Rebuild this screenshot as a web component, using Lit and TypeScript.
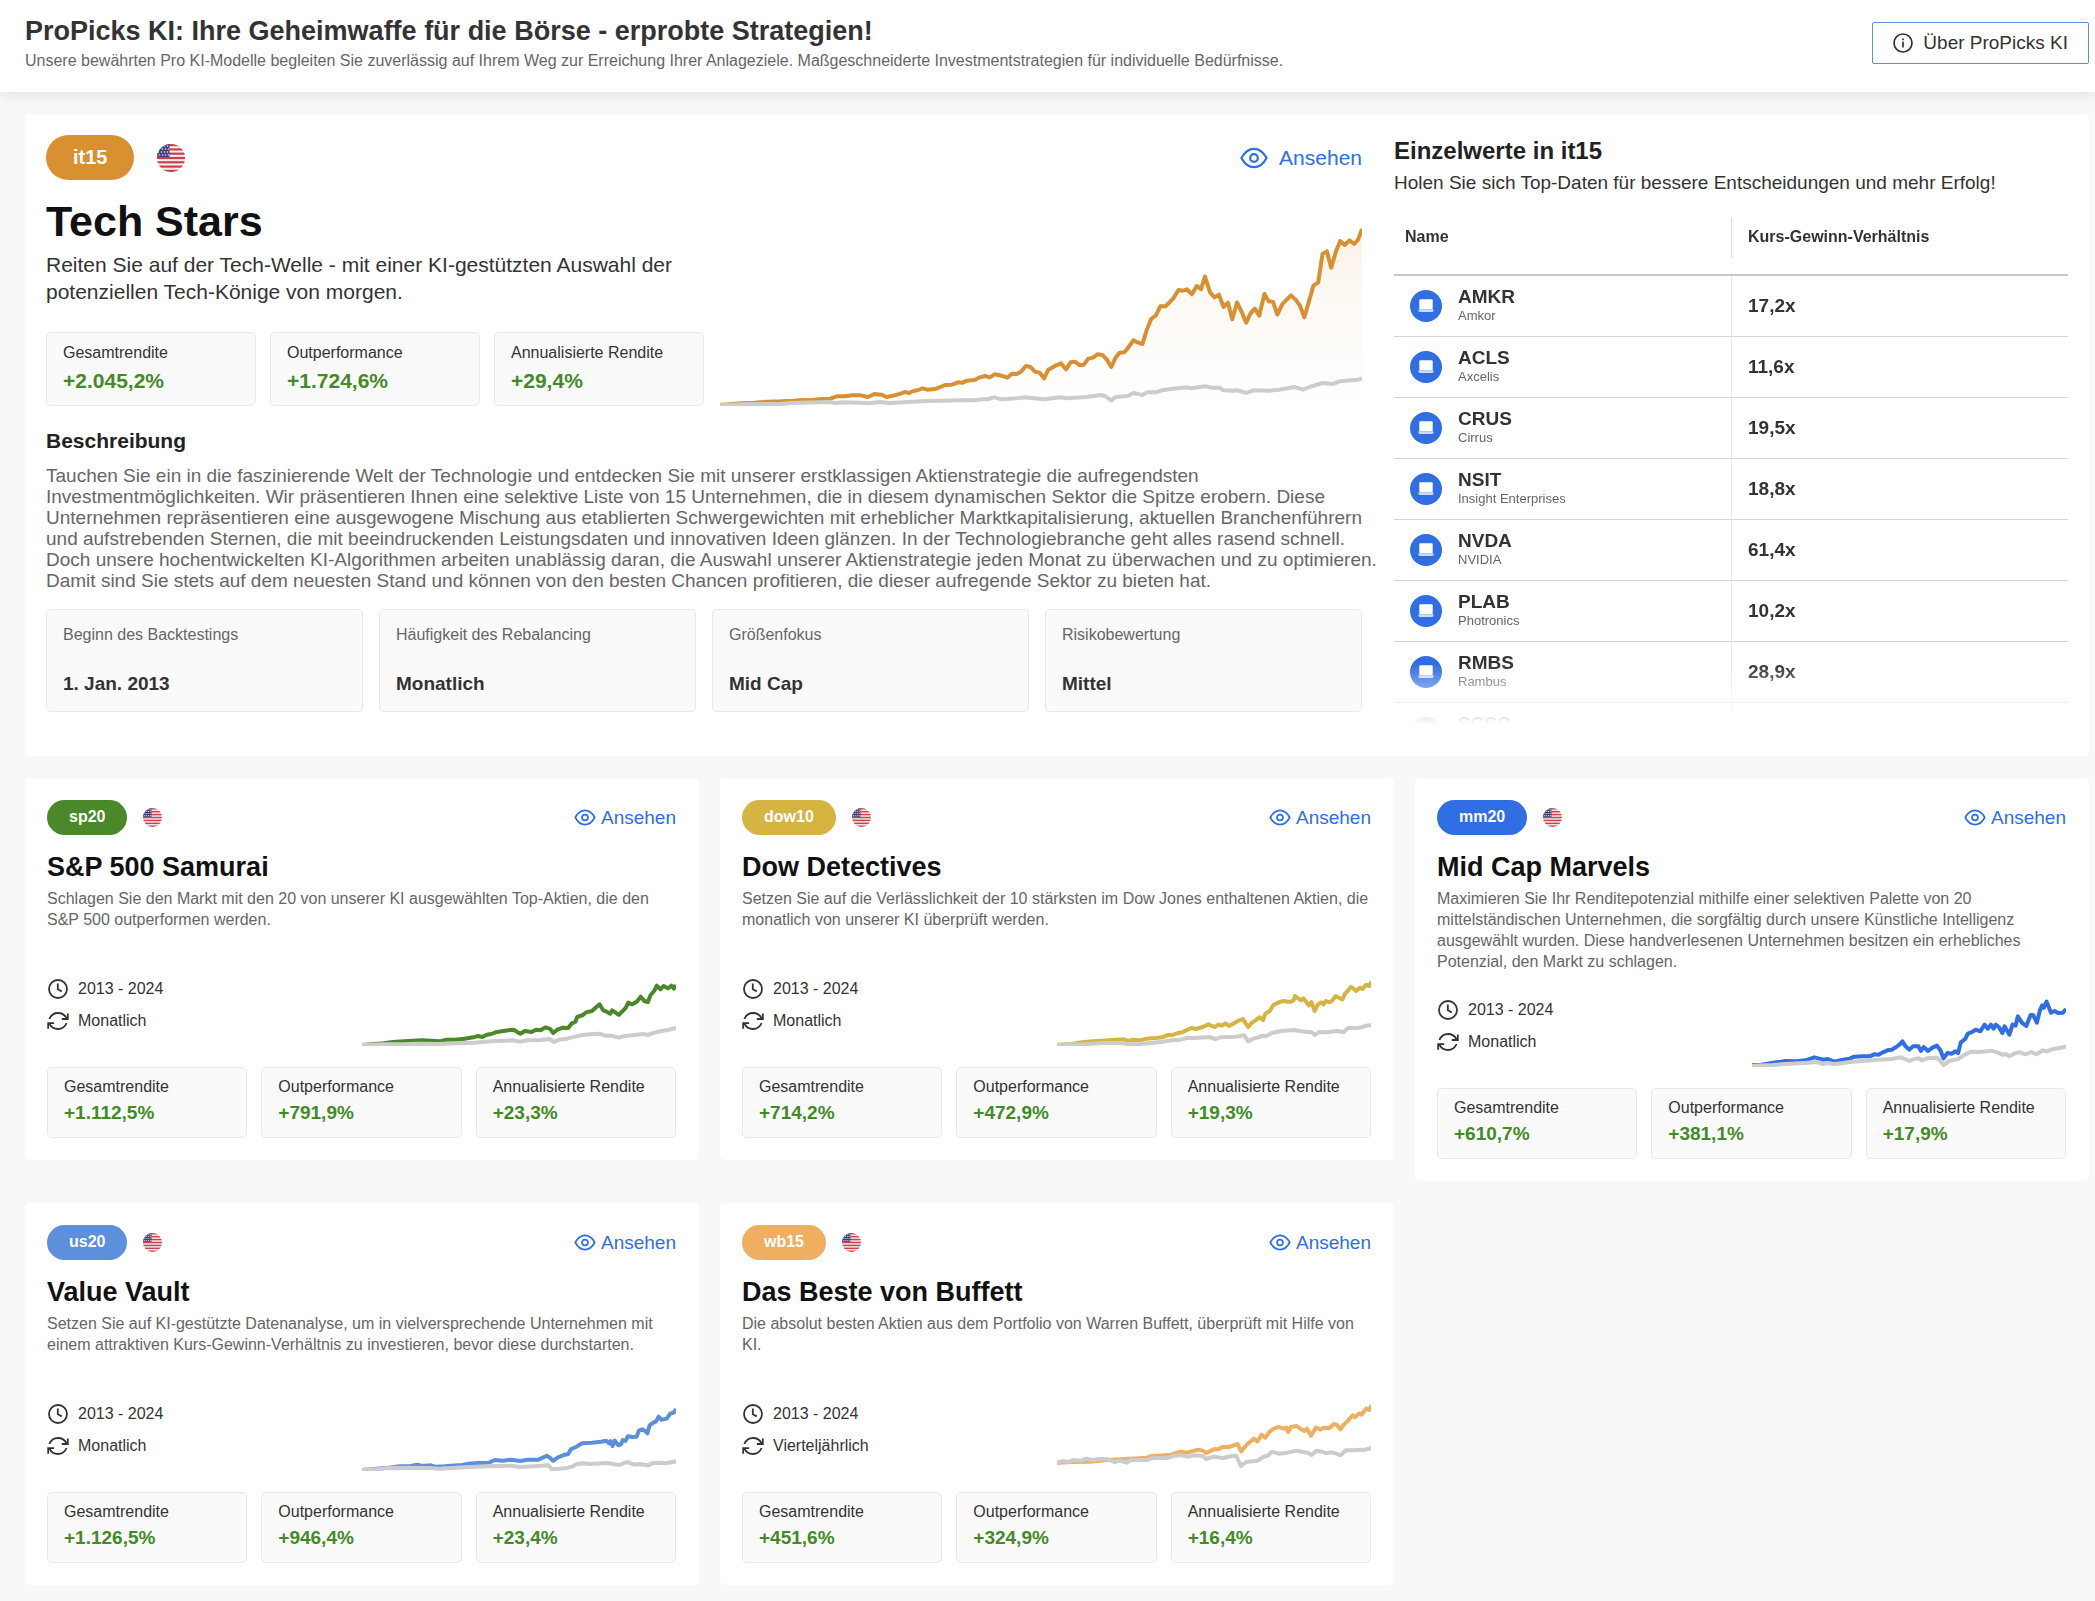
import { LitElement, html, svg, css } from "lit";
import { customElement, property } from "lit/decorators.js";
import { styleMap } from "lit/directives/style-map.js";

interface Chart {
  viewBox: string;
  line: string;
  benchmark: string;
}

interface Strategy {
  code: string;
  color: string;
  name: string;
  text: string;
  rebalancing: string;
  stats: [string, string][];
  chart: Chart;
}

const stats = (total: string, out: string, annual: string): [string, string][] => [
  ["Gesamtrendite", total],
  ["Outperformance", out],
  ["Annualisierte Rendite", annual],
];

const featuredChart: Chart = {
  viewBox: "46 50 1480 567",
  line: "46,614 95,609 125,607 155,604 185,603 215,601 235,599 255,600 280,596 300,595 315,588 335,588 350,585 370,585 387,590 402,581 418,583 430,590 448,585 462,580 472,575 482,578 492,572 503,569 513,564 524,568 545,565 565,554 580,553 595,546 605,547 615,541 633,539 645,531 657,527 668,531 679,522 698,527 708,532 719,520 730,521 740,514 751,497 762,500 772,514 783,517 793,534 803,508 815,499 832,489 844,507 854,486 865,484 875,495 885,493 895,475 906,472 916,462 928,464 938,478 948,500 958,472 967,457 978,456 988,440 999,420 1010,427 1020,431 1030,388 1040,356 1051,345 1061,318 1073,318 1091,294 1103,269 1113,271 1123,267 1134,282 1145,257 1155,266 1164,229 1176,277 1186,291 1196,283 1207,320 1217,307 1227,357 1238,306 1248,333 1259,367 1269,339 1279,325 1289,346 1301,281 1311,303 1321,305 1331,343 1342,312 1362,285 1373,298 1383,316 1393,351 1404,302 1414,256 1425,246 1435,161 1445,153 1455,202 1466,153 1476,122 1486,134 1497,120 1508,131 1517,118 1526,86",
  benchmark: "46,615 95,612 160,611 180,612 210,608 300,605 310,608 330,606 370,607 390,609 415,605 435,608 480,605 520,602 560,601 590,600 630,600 650,597 665,596 678,591 695,597 730,594 750,591 770,594 793,597 830,591 845,594 890,590 925,584 935,588 948,600 958,590 985,587 999,578 1020,584 1030,576 1050,576 1065,570 1090,565 1123,561 1133,564 1164,558 1180,562 1197,562 1207,570 1228,571 1240,570 1259,578 1275,570 1310,571 1335,568 1370,560 1390,568 1405,560 1420,554 1435,548 1458,551 1475,543 1500,540 1517,538 1526,534",
};

const strategies: Strategy[] = [
  {
    code: "sp20",
    color: "#4a8829",
    name: "S&P 500 Samurai",
    text: "Schlagen Sie den Markt mit den 20 von unserer KI ausgewählten Top-Aktien, die den S&P 500 outperformen werden.",
    rebalancing: "Monatlich",
    stats: stats("+1.112,5%", "+791,9%", "+23,3%"),
    chart: {
      viewBox: "811 591 703 234",
      line: "811,822 860,817 880,813 905,811 945,808 965,809 985,811 1000,806 1020,806 1040,803 1060,799 1070,795 1080,798 1090,791 1100,789 1110,784 1130,779 1150,776 1160,785 1165,788 1175,780 1190,783 1200,776 1210,778 1222,769 1232,774 1238,786 1248,776 1260,770 1272,771 1280,757 1288,752 1292,738 1305,732 1312,724 1325,720 1333,710 1342,700 1350,718 1358,722 1366,728 1370,718 1378,725 1385,732 1392,722 1400,712 1406,695 1415,700 1425,692 1434,677 1442,690 1450,693 1456,672 1464,660 1470,644 1478,655 1485,645 1495,652 1503,644 1508,653 1513,642",
      benchmark: "811,822 860,820 900,820 940,818 980,819 1020,817 1060,815 1100,811 1130,809 1150,808 1163,812 1180,808 1210,807 1230,804 1240,813 1250,806 1270,803 1280,799 1300,793 1320,790 1342,788 1355,794 1368,794 1385,800 1395,796 1420,792 1440,789 1450,792 1465,785 1480,780 1495,777 1513,771",
    },
  },
  {
    code: "dow10",
    color: "#d5b441",
    name: "Dow Detectives",
    text: "Setzen Sie auf die Verlässlichkeit der 10 stärksten im Dow Jones enthaltenen Aktien, die monatlich von unserer KI überprüft werden.",
    rebalancing: "Monatlich",
    stats: stats("+714,2%", "+472,9%", "+19,3%"),
    chart: {
      viewBox: "800 591 702 234",
      line: "800,822 835,818 860,813 880,811 900,809 925,807 950,805 960,810 968,806 985,808 1000,803 1020,801 1035,799 1045,793 1060,791 1070,786 1080,784 1090,777 1100,771 1110,774 1125,768 1138,760 1145,765 1153,768 1160,761 1168,764 1176,757 1184,765 1195,757 1205,749 1215,744 1221,757 1227,768 1235,755 1243,748 1252,739 1260,747 1265,728 1275,720 1283,702 1295,694 1305,690 1315,692 1322,692 1328,688 1331,675 1338,682 1345,688 1350,682 1357,694 1362,703 1368,693 1375,720 1382,701 1390,694 1395,700 1400,690 1408,694 1415,688 1422,675 1430,681 1437,685 1443,668 1450,658 1456,648 1462,653 1468,660 1476,650 1482,654 1490,641 1497,645 1502,632",
      benchmark: "800,821 870,819 900,816 945,816 960,820 985,819 1010,816 1035,812 1055,808 1075,806 1090,801 1110,801 1140,798 1153,804 1165,799 1200,797 1218,793 1227,811 1240,802 1250,799 1258,794 1265,796 1280,786 1300,780 1330,777 1345,781 1360,783 1368,783 1376,792 1385,783 1400,784 1425,780 1440,783 1450,771 1470,771 1480,769 1490,764 1502,762",
    },
  },
  {
    code: "mm20",
    color: "#2f6ee3",
    name: "Mid Cap Marvels",
    text: "Maximieren Sie Ihr Renditepotenzial mithilfe einer selektiven Palette von 20 mittelständischen Unternehmen, die sorgfältig durch unsere Künstliche Intelligenz ausgewählt wurden. Diese handverlesenen Unternehmen besitzen ein erhebliches Potenzial, den Markt zu schlagen.",
    rebalancing: "Monatlich",
    stats: stats("+610,7%", "+381,1%", "+17,9%"),
    chart: {
      viewBox: "794 656 711 234",
      line: "794,884 815,883 835,879 870,872 895,873 915,870 935,861 955,868 965,866 980,874 1000,868 1015,865 1025,859 1045,858 1060,858 1070,852 1080,853 1090,846 1100,840 1110,838 1120,830 1128,822 1134,813 1140,826 1150,838 1158,828 1170,828 1176,842 1182,830 1192,842 1202,832 1212,826 1220,840 1227,864 1236,848 1246,850 1253,843 1260,848 1266,816 1276,806 1282,790 1290,786 1300,778 1310,783 1320,763 1327,775 1334,763 1340,775 1345,763 1352,770 1360,788 1365,768 1376,793 1383,763 1390,766 1395,738 1404,757 1414,767 1424,734 1430,735 1438,757 1445,720 1450,705 1454,712 1460,694 1470,727 1478,722 1486,728 1497,727 1504,716",
      benchmark: "794,886 840,884 870,881 910,878 940,875 955,881 965,878 980,881 1000,878 1020,874 1050,871 1080,868 1110,866 1130,861 1150,872 1160,866 1172,864 1178,870 1190,864 1212,862 1220,872 1227,884 1240,872 1260,866 1275,853 1290,844 1310,845 1335,841 1350,847 1360,853 1368,851 1376,858 1390,848 1400,846 1412,852 1425,845 1437,852 1452,840 1460,843 1475,836 1490,833 1504,828",
    },
  },
  {
    code: "us20",
    color: "#5c8fdc",
    name: "Value Vault",
    text: "Setzen Sie auf KI-gestützte Datenanalyse, um in vielversprechende Unternehmen mit einem attraktiven Kurs-Gewinn-Verhältnis zu investieren, bevor diese durchstarten.",
    rebalancing: "Monatlich",
    stats: stats("+1.126,5%", "+946,4%", "+23,4%"),
    chart: {
      viewBox: "811 609 703 234",
      line: "811,840 870,833 895,829 920,828 935,824 945,828 965,826 975,830 995,829 1010,827 1035,825 1050,821 1070,819 1095,818 1108,810 1125,812 1145,809 1165,813 1180,809 1205,809 1215,803 1224,797 1232,804 1238,813 1248,803 1262,795 1272,792 1278,778 1290,770 1303,760 1325,758 1345,755 1357,752 1363,760 1367,753 1371,768 1376,752 1384,766 1390,763 1394,750 1400,753 1405,739 1415,741 1425,740 1430,722 1437,718 1443,722 1449,730 1454,706 1462,698 1468,695 1474,680 1480,689 1485,688 1492,686 1500,671 1508,668 1513,657",
      benchmark: "811,840 850,837 875,833 960,834 985,836 1040,832 1090,829 1145,827 1165,831 1205,828 1228,826 1236,838 1265,835 1280,830 1290,823 1305,820 1320,822 1360,819 1375,823 1387,825 1403,816 1420,824 1430,822 1450,826 1460,820 1475,818 1490,820 1513,814",
    },
  },
  {
    code: "wb15",
    color: "#eeaf60",
    name: "Das Beste von Buffett",
    text: "Die absolut besten Aktien aus dem Portfolio von Warren Buffett, überprüft mit Hilfe von KI.",
    rebalancing: "Vierteljährlich",
    stats: stats("+451,6%", "+324,9%", "+16,4%"),
    chart: {
      viewBox: "800 609 702 234",
      line: "800,818 835,816 875,815 905,811 940,808 960,806 980,805 1000,803 1012,798 1040,796 1055,794 1075,785 1090,788 1115,779 1125,782 1133,789 1150,778 1160,778 1170,770 1182,772 1203,762 1211,784 1225,762 1240,746 1247,755 1257,734 1265,743 1275,724 1285,715 1295,711 1305,716 1312,713 1316,726 1322,711 1335,708 1345,718 1352,723 1358,716 1367,737 1378,713 1388,719 1395,713 1408,714 1418,702 1424,704 1433,718 1440,704 1450,691 1460,676 1465,682 1475,670 1480,674 1490,656 1497,660 1502,646",
      benchmark: "800,820 812,813 825,816 835,810 855,812 865,806 880,810 895,807 915,808 928,816 940,812 955,818 965,810 1000,810 1015,804 1045,804 1060,798 1075,795 1090,800 1108,796 1125,798 1133,807 1150,800 1170,804 1190,798 1200,797 1205,812 1211,828 1222,816 1248,812 1260,801 1270,797 1280,785 1295,791 1310,789 1335,782 1350,786 1360,788 1368,795 1380,782 1393,785 1400,790 1410,787 1420,789 1433,796 1445,781 1460,781 1475,779 1485,780 1502,774",
    },
  },
];

const holdings: [string, string, string][] = [
  ["AMKR", "Amkor", "17,2x"],
  ["ACLS", "Axcelis", "11,6x"],
  ["CRUS", "Cirrus", "19,5x"],
  ["NSIT", "Insight Enterprises", "18,8x"],
  ["NVDA", "NVIDIA", "61,4x"],
  ["PLAB", "Photronics", "10,2x"],
  ["RMBS", "Rambus", "28,9x"],
  ["SCSC", "", ""],
];

const facts: [string, string][] = [
  ["Beginn des Backtestings", "1. Jan. 2013"],
  ["Häufigkeit des Rebalancing", "Monatlich"],
  ["Größenfokus", "Mid Cap"],
  ["Risikobewertung", "Mittel"],
];

const flagIcon = html`<svg class="flag" viewBox="0 0 28 28" aria-hidden="true">
  <defs><clipPath id="disc"><circle cx="14" cy="14" r="14" /></clipPath></defs>
  <g clip-path="url(#disc)">
    <rect width="28" height="28" fill="#f7eeee" />
    ${[0, 1, 2, 3, 4, 5, 6].map(
      (i) => svg`<rect y=${i * 4.3} width="28" height="2.2" fill="#c8414b" />`,
    )}
    <rect width="12.5" height="13" fill="#41427c" />
    ${[3, 6, 9, 12].map((y, row) =>
      [1.5, 4.5, 7.5, 10.5].map(
        (x) => svg`<circle cx=${x + (row % 2)} cy=${y - 1} r="0.8" fill="#e6e6f2" />`,
      ),
    )}
  </g>
</svg>`;

const eyeIcon = html`<svg class="eye" viewBox="0 0 28 22" aria-hidden="true" fill="none" stroke="currentColor" stroke-width="2.2">
  <path stroke-linejoin="round" d="M1.4 11C4.6 5 9 1.8 14 1.8S23.4 5 26.6 11C23.4 17 19 20.2 14 20.2S4.6 17 1.4 11Z" />
  <circle cx="14" cy="11" r="3.8" />
</svg>`;

const infoIcon = html`<svg class="info" viewBox="0 0 20 20" aria-hidden="true" fill="none" stroke="currentColor">
  <circle cx="10" cy="10" r="9" stroke-width="1.7" />
  <path stroke-width="1.7" d="M10 8.8V14.4M10 5.6V7.3" />
</svg>`;

const clockIcon = html`<svg class="meta-icon" viewBox="0 0 22 20" aria-hidden="true" fill="none" stroke="currentColor" stroke-width="1.8">
  <circle cx="11" cy="10" r="9" />
  <path d="M10.8 4.5V10.3L14.8 12.4" />
</svg>`;

const refreshIcon = html`<svg class="meta-icon" viewBox="0 0 22 20" aria-hidden="true" fill="none" stroke="currentColor" stroke-width="1.8">
  <path d="M2.4 8C3.9 4.4 7.2 2 11 2C14.8 2 18 4.2 19.6 7.4M20.8 2.4V8H14.8M19.6 12C18.1 15.6 14.8 18 11 18C7.2 18 4 15.8 2.4 12.6M1.2 17.8V12.100H7.2" />
</svg>`;

const laptopIcon = html`<svg class="ticker-icon" viewBox="0 0 32 32" aria-hidden="true">
  <circle cx="16" cy="16" r="16" fill="#2f6ee3" />
  <rect x="9.3" y="9.3" width="13.4" height="10" rx="1" fill="#fff" />
  <path d="M8.5 19.3H23.5V20.5A1.5 1.5 0 0 1 22 22H10A1.5 1.5 0 0 1 8.5 20.5Z" fill="#cbdcf8" />
</svg>`;

const shared = css`
  :host {
    display: block;
    font-family: "Liberation Sans", Arial, sans-serif;
    color: #333;
  }
  * {
    box-sizing: border-box;
  }
  h1, h2, h3, p, dl, dd {
    margin: 0;
  }
  .card {
    background: #fff;
    border-radius: 5px;
  }
  .top {
    display: flex;
    align-items: center;
  }
  .pill {
    color: #fff;
    font-weight: 700;
  }
  .view {
    display: flex;
    align-items: center;
    margin-left: auto;
    color: #2f6ee3;
    text-decoration: none;
  }
`;

@customElement("performance-chart")
export class PerformanceChart extends LitElement {
  @property({ attribute: false }) chart!: Chart;
  @property() color = "";
  @property({ type: Boolean }) filled = false;

  static styles = css`
    :host {
      display: block;
    }
    svg {
      display: block;
      width: 100%;
      height: 100%;
    }
    polyline {
      fill: none;
      stroke-width: 4px;
      stroke-linejoin: round;
      vector-effect: non-scaling-stroke;
    }
    .benchmark {
      stroke: #ccc;
    }
  `;

  render() {
    const { viewBox, line, benchmark } = this.chart;
    const [x, y, w, h] = viewBox.split(" ").map(Number);
    return html`<svg viewBox=${viewBox} preserveAspectRatio="none" aria-hidden="true">
      <defs>
        <linearGradient id="fade" x1="0" y1="0" x2="0" y2="1">
          <stop offset="0" stop-color=${this.color} stop-opacity="0.12" />
          <stop offset="0.4" stop-color=${this.color} stop-opacity="0.05" />
          <stop offset="1" stop-color=${this.color} stop-opacity="0" />
        </linearGradient>
      </defs>
      ${this.filled
        ? svg`<polygon fill="url(#fade)" points="${line} ${x + w},${y + h} ${x},${y + h}" />`
        : ""}
      <polyline points=${line} stroke=${this.color} />
      <polyline class="benchmark" points=${benchmark} />
    </svg>`;
  }
}

@customElement("stat-boxes")
export class StatBoxes extends LitElement {
  @property({ attribute: false }) items: [string, string][] = [];
  @property({ type: Boolean, reflect: true }) large = false;

  static styles = [
    shared,
    css`
      .list {
        display: grid;
        grid-template-columns: repeat(3, minmax(0, 1fr));
        gap: 14px;
      }
      .box {
        padding: 9px 16px 12px;
        border: 1px solid #e8e8e8;
        border-radius: 5px;
        background: #fafafa;
        white-space: nowrap;
      }
      .label {
        font-size: 16px;
        line-height: 20px;
      }
      .value {
        margin-top: 4px;
        font-size: 19px;
        line-height: 24px;
        font-weight: 700;
        color: #448a28;
      }
      :host([large]) .box {
        padding: 10px 16px 11px;
      }
      :host([large]) .value {
        margin-top: 5px;
        font-size: 21px;
        line-height: 26px;
      }
    `,
  ];

  render() {
    return html`<dl class="list">
      ${this.items.map(
        ([label, value]) => html`<div class="box">
          <dt class="label">${label}</dt>
          <dd class="value">${value}</dd>
        </div>`,
      )}
    </dl>`;
  }
}

@customElement("strategy-card")
export class StrategyCard extends LitElement {
  @property({ attribute: false }) strategy!: Strategy;

  static styles = [
    shared,
    css`
      .card {
        padding: 22px 23px 22px 22px;
      }
      .pill {
        padding: 0 22px;
        border-radius: 18px;
        font-size: 16px;
        line-height: 34px;
        height: 35px;
      }
      .flag {
        width: 19px;
        height: 19px;
        margin-left: 16px;
      }
      .view {
        gap: 5px;
        font-size: 19px;
        line-height: 24px;
      }
      .eye {
        width: 22px;
        height: 17px;
      }
      .name {
        margin-top: 16px;
        font-size: 27px;
        line-height: 32px;
        color: #111;
      }
      .text {
        min-height: 63px;
        margin-top: 5px;
        font-size: 16px;
        line-height: 21px;
        color: #666;
      }
      .middle {
        display: grid;
        grid-template-columns: 1fr 1fr;
        margin: 17px 0 21px;
      }
      .meta {
        display: flex;
        flex-direction: column;
        gap: 12px;
        padding-top: 11px;
      }
      .meta-row {
        display: flex;
        align-items: center;
        gap: 9px;
        font-size: 16px;
        line-height: 20px;
      }
      .meta-icon {
        width: 22px;
        height: 20px;
      }
      .chart {
        height: 78px;
      }
    `,
  ];

  render() {
    const s = this.strategy;
    return html`<article class="card">
      <div class="top">
        <span class="pill" style=${styleMap({ background: s.color })}>${s.code}</span>
        ${flagIcon}
        <a class="view" href="#${s.code}">${eyeIcon}Ansehen</a>
      </div>
      <h2 class="name">${s.name}</h2>
      <p class="text">${s.text}</p>
      <div class="middle">
        <div class="meta">
          <div class="meta-row">${clockIcon}2013 - 2024</div>
          <div class="meta-row">${refreshIcon}${s.rebalancing}</div>
        </div>
        <performance-chart class="chart" .chart=${s.chart} color=${s.color}></performance-chart>
      </div>
      <stat-boxes .items=${s.stats}></stat-boxes>
    </article>`;
  }
}

@customElement("featured-strategy")
export class FeaturedStrategy extends LitElement {
  static styles = [
    shared,
    css`
      .card {
        display: grid;
        grid-template-columns: 2fr 1fr;
        padding: 21px 21px 31px;
      }
      .main {
        min-width: 0;
        padding-right: 32px;
      }
      .pill {
        padding: 0 27px;
        border-radius: 23px;
        background: #d99031;
        font-size: 20px;
        line-height: 45px;
      }
      .flag {
        width: 28px;
        height: 28px;
        margin-left: 23px;
      }
      .view {
        gap: 11px;
        font-size: 21px;
        line-height: 26px;
      }
      .eye {
        width: 28px;
        height: 22px;
      }
      .hero {
        display: grid;
        grid-template-columns: 1fr 1fr;
        align-items: end;
      }
      .name {
        margin-top: 17px;
        font-size: 43px;
        line-height: 48px;
        color: #111;
      }
      .lead {
        margin: 6px 0 27px;
        font-size: 21px;
        line-height: 27px;
      }
      .chart {
        height: 189px;
        margin-left: 16px;
      }
      .subtitle {
        margin-top: 22px;
        font-size: 21px;
        line-height: 26px;
        color: #222;
      }
      .description {
        margin: 11px -16px 18px 0;
        font-size: 19px;
        line-height: 21px;
        color: #666;
      }
      .facts {
        display: grid;
        grid-template-columns: repeat(4, minmax(0, 1fr));
        gap: 16px;
      }
      .fact {
        padding: 15px 16px;
        border: 1px solid #e8e8e8;
        border-radius: 5px;
        background: #fafafa;
      }
      .fact-label {
        font-size: 16px;
        line-height: 20px;
        color: #666;
      }
      .fact-value {
        margin-top: 27px;
        font-size: 19px;
        line-height: 24px;
        font-weight: 700;
      }
      .side-title {
        margin-top: 2px;
        font-size: 24px;
        line-height: 28px;
        color: #222;
      }
      .side-text {
        margin-top: 6px;
        font-size: 19px;
        line-height: 24px;
      }
      .holdings {
        height: 507px;
        margin-top: 23px;
        overflow: hidden;
        mask-image: linear-gradient(#000 446px, transparent 507px);
      }
      .table {
        width: 100%;
        table-layout: fixed;
        border-collapse: separate;
        border-spacing: 0;
        text-align: left;
      }
      .head {
        height: 58px;
        padding: 0;
        border-bottom: 2px solid #c8c8c8;
        vertical-align: top;
        font-size: 16px;
      }
      .head-label {
        height: 40px;
        padding: 0 11px;
        line-height: 37px;
      }
      .head:last-child .head-label {
        padding-left: 16px;
        border-left: 1px solid #ddd;
      }
      .cell {
        height: 61px;
        padding: 0 16px;
        border-bottom: 1px solid #d4d4d4;
      }
      .cell:last-child {
        border-left: 1px solid #e8e8e8;
        font-size: 19px;
        font-weight: 700;
      }
      .company {
        display: flex;
        align-items: center;
        gap: 16px;
      }
      .ticker-icon {
        width: 32px;
        height: 32px;
      }
      .ticker {
        display: block;
        font-size: 19px;
        line-height: 21px;
        font-weight: 700;
      }
      .company-name {
        display: block;
        height: 20px;
        font-size: 13px;
        line-height: 18px;
        color: #666;
      }
    `,
  ];

  render() {
    return html`<section class="card">
      <div class="main">
        <div class="top">
          <span class="pill">it15</span>
          ${flagIcon}
          <a class="view" href="#it15">${eyeIcon}Ansehen</a>
        </div>
        <div class="hero">
          <div>
            <h2 class="name">Tech Stars</h2>
            <p class="lead">
              Reiten Sie auf der Tech-Welle - mit einer KI-gestützten Auswahl der potenziellen
              Tech-Könige von morgen.
            </p>
            <stat-boxes large .items=${stats("+2.045,2%", "+1.724,6%", "+29,4%")}></stat-boxes>
          </div>
          <performance-chart class="chart" filled .chart=${featuredChart} color="#d99031"></performance-chart>
        </div>
        <h3 class="subtitle">Beschreibung</h3>
        <p class="description">
          Tauchen Sie ein in die faszinierende Welt der Technologie und entdecken Sie mit unserer
          erstklassigen Aktienstrategie die aufregendsten Investmentmöglichkeiten. Wir präsentieren
          Ihnen eine selektive Liste von 15 Unternehmen, die in diesem dynamischen Sektor die Spitze
          erobern. Diese Unternehmen repräsentieren eine ausgewogene Mischung aus etablierten
          Schwergewichten mit erheblicher Marktkapitalisierung, aktuellen Branchenführern und
          aufstrebenden Sternen, die mit beeindruckenden Leistungsdaten und innovativen Ideen
          glänzen. In der Technologiebranche geht alles rasend schnell. Doch unsere hochentwickelten
          KI-Algorithmen arbeiten unablässig daran, die Auswahl unserer Aktienstrategie jeden Monat
          zu überwachen und zu optimieren. Damit sind Sie stets auf dem neuesten Stand und können von
          den besten Chancen profitieren, die dieser aufregende Sektor zu bieten hat.
        </p>
        <dl class="facts">
          ${facts.map(
            ([label, value]) => html`<div class="fact">
              <dt class="fact-label">${label}</dt>
              <dd class="fact-value">${value}</dd>
            </div>`,
          )}
        </dl>
      </div>
      <div class="side">
        <h3 class="side-title">Einzelwerte in it15</h3>
        <p class="side-text">Holen Sie sich Top-Daten für bessere Entscheidungen und mehr Erfolg!</p>
        <div class="holdings">
          <table class="table">
            <thead>
              <tr>
                <th class="head"><div class="head-label">Name</div></th>
                <th class="head"><div class="head-label">Kurs-Gewinn-Verhältnis</div></th>
              </tr>
            </thead>
            <tbody>
              ${holdings.map(
                ([ticker, company, ratio]) => html`<tr>
                  <td class="cell">
                    <div class="company">
                      ${laptopIcon}
                      <div>
                        <span class="ticker">${ticker}</span>
                        <span class="company-name">${company}</span>
                      </div>
                    </div>
                  </td>
                  <td class="cell">${ratio}</td>
                </tr>`,
              )}
            </tbody>
          </table>
        </div>
      </div>
    </section>`;
  }
}

@customElement("app-root")
export class AppRoot extends LitElement {
  static styles = [
    shared,
    css`
      :host {
        min-height: 100vh;
        background: #f8f8f8;
      }
      .header {
        display: flex;
        justify-content: space-between;
        align-items: flex-start;
        padding: 15px 6px 21px 25px;
        background: #fff;
        box-shadow: 0 2px 12px rgba(0, 0, 0, 0.1);
      }
      .title {
        font-size: 27px;
        line-height: 32px;
      }
      .intro {
        margin-top: 4px;
        font-size: 16px;
        line-height: 20px;
        color: #666;
      }
      .about {
        display: flex;
        align-items: center;
        gap: 10px;
        height: 42px;
        margin-top: 7px;
        padding: 0 20px;
        border: 1px solid #5c8fdc;
        border-radius: 2px;
        background: #fff;
        color: #333;
        font-family: inherit;
        font-size: 19px;
      }
      .info {
        width: 20px;
        height: 20px;
      }
      .content {
        padding: 22px 6px 14px 25px;
      }
      .grid {
        display: grid;
        grid-template-columns: repeat(3, minmax(0, 1fr));
        gap: 22px 21px;
        align-items: start;
        margin-top: 22px;
      }
    `,
  ];

  render() {
    return html`
      <header class="header">
        <div>
          <h1 class="title">ProPicks KI: Ihre Geheimwaffe für die Börse - erprobte Strategien!</h1>
          <p class="intro">
            Unsere bewährten Pro KI-Modelle begleiten Sie zuverlässig auf Ihrem Weg zur Erreichung
            Ihrer Anlageziele. Maßgeschneiderte Investmentstrategien für individuelle Bedürfnisse.
          </p>
        </div>
        <button class="about" type="button">${infoIcon}Über ProPicks KI</button>
      </header>
      <main class="content">
        <featured-strategy></featured-strategy>
        <div class="grid">
          ${strategies.map((s) => html`<strategy-card .strategy=${s}></strategy-card>`)}
        </div>
      </main>
    `;
  }
}
